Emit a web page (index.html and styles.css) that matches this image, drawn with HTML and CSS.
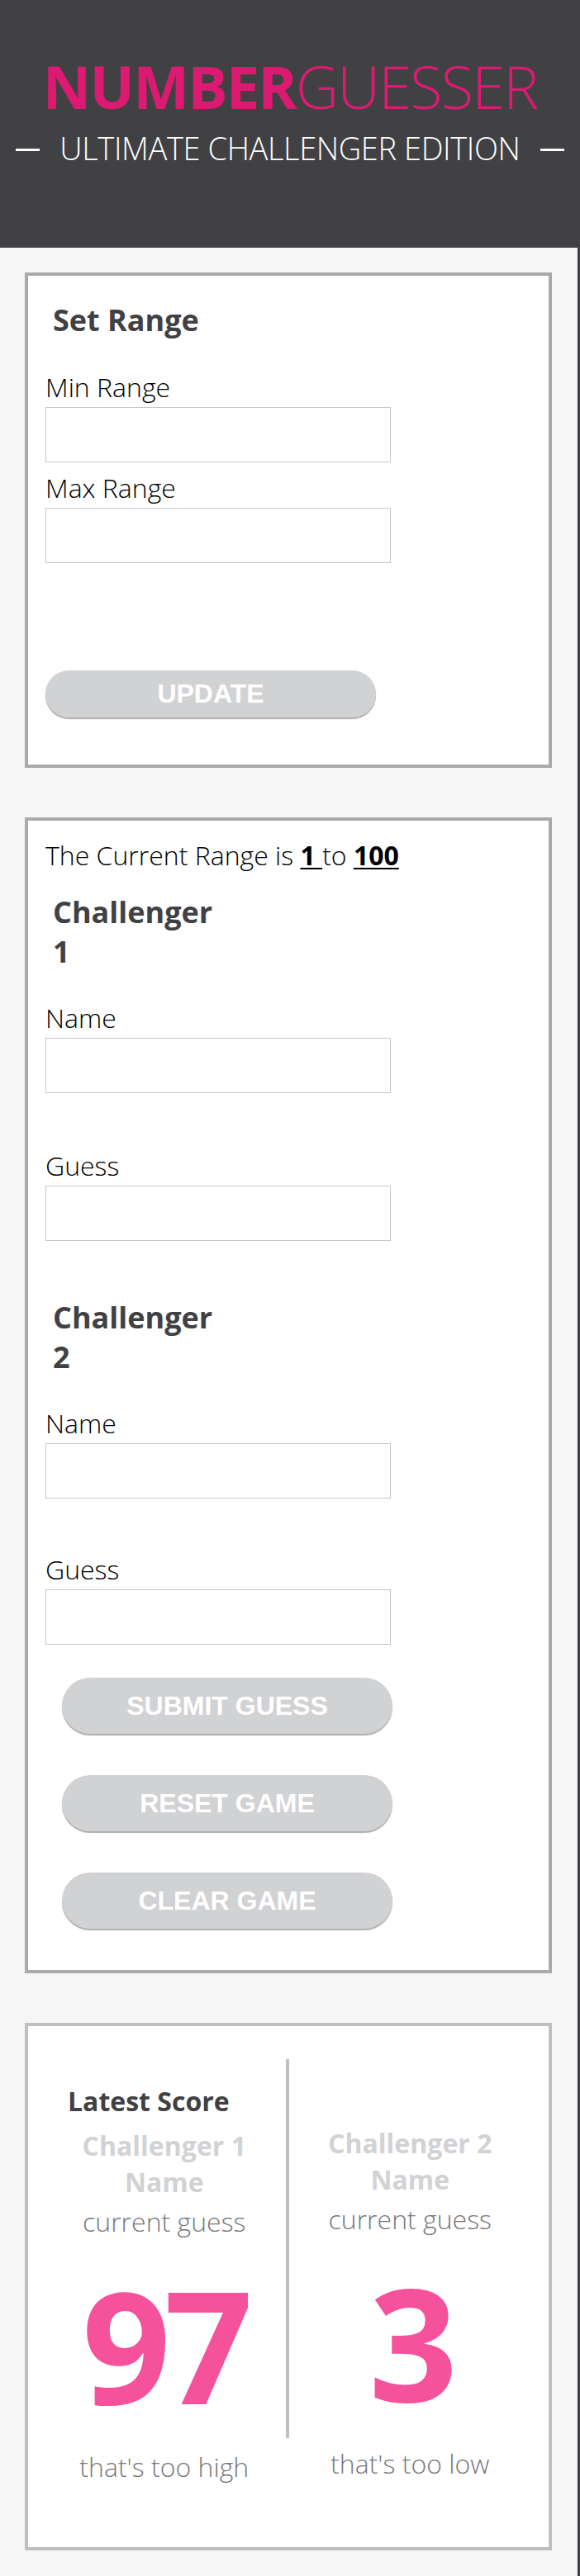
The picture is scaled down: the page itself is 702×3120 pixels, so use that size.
FILE: index.html
```html
<!DOCTYPE html>
<html lang="en">
<head>
<meta charset="utf-8">
<title>Number Guesser</title>
<link rel="stylesheet" href="styles.css">
</head>
<body>
<header class="masthead">
  <h1 class="title"><span class="title-bold">NUMBER</span><span class="title-light">GUESSER</span></h1>
  <p class="subtitle">ULTIMATE CHALLENGER EDITION</p>
</header>
<main class="page">
  <section class="card card-range">
    <h2 class="card-heading">Set Range</h2>
    <label class="field-label field-label--first" for="min-range">Min Range</label>
    <input class="field-input" id="min-range" type="text">
    <label class="field-label field-label--tight" for="max-range">Max Range</label>
    <input class="field-input" id="max-range" type="text">
    <button class="pill-btn pill-btn--update" type="button">UPDATE</button>
  </section>

  <section class="card card-game">
    <p class="range-line">The Current Range is <strong class="range-num">1 </strong>to <strong class="range-num">100</strong></p>
    <h2 class="card-heading card-heading--challenger">Challenger 1</h2>
    <label class="field-label field-label--after-head" for="name-1">Name</label>
    <input class="field-input" id="name-1" type="text">
    <label class="field-label field-label--loose" for="guess-1">Guess</label>
    <input class="field-input" id="guess-1" type="text">
    <h2 class="card-heading card-heading--challenger card-heading--second">Challenger 2</h2>
    <label class="field-label field-label--after-head" for="name-2">Name</label>
    <input class="field-input" id="name-2" type="text">
    <label class="field-label field-label--loose2" for="guess-2">Guess</label>
    <input class="field-input" id="guess-2" type="text">
    <div class="game-actions">
      <button class="pill-btn pill-btn--game" type="button">SUBMIT GUESS</button>
      <button class="pill-btn pill-btn--game" type="button">RESET GAME</button>
      <button class="pill-btn pill-btn--game" type="button">CLEAR GAME</button>
    </div>
  </section>

  <section class="card card-score">
    <div class="score-grid">
      <div class="score-col score-col--left">
        <h3 class="score-heading">Latest Score</h3>
        <p class="score-name">Challenger 1 Name</p>
        <p class="score-label">current guess</p>
        <p class="score-number">97</p>
      </div>
      <div class="score-divider"></div>
      <div class="score-col score-col--right">
        <p class="score-name">Challenger 2 Name</p>
        <p class="score-label">current guess</p>
        <p class="score-number">3</p>
      </div>
      <p class="score-feedback score-feedback--left">that's too high</p>
      <p class="score-feedback score-feedback--right">that's too low</p>
    </div>
  </section>
</main>
</body>
</html>
```
FILE: styles.css
```css
html {
  background: #414143;
}

body {
  margin: 0;
  font-family: "Open Sans", "Liberation Sans", sans-serif;
  color: #000;
}

/* ---------- header ---------- */
.masthead {
  box-sizing: border-box;
  height: 300px;
  padding-top: 68px;
  background: #414143;
  text-align: center;
}

.title {
  margin: 0;
  font-size: 72px;
  line-height: 72px;
  font-weight: 700;
  letter-spacing: -1.8px;
  color: #dc1a72;
}

.title-light {
  font-weight: 300;
}

.subtitle {
  display: flex;
  justify-content: center;
  align-items: center;
  gap: 24px;
  margin: 20px 0 0;
  font-size: 38px;
  line-height: 38px;
  font-weight: 300;
  letter-spacing: -0.4px;
  color: #fff;
}

.subtitle::before,
.subtitle::after {
  content: "";
  width: 29px;
  height: 3px;
  margin-top: 5px;
  background: #fff;
}

/* ---------- page ---------- */
.page {
  margin-right: 3px;
  padding: 30px 31px 31px 30px;
  background: #f6f6f6;
}

.card {
  box-sizing: border-box;
  background: #fff;
  border: 4px solid #aaaaaa;
  padding: 0 21px;
}

.card + .card {
  margin-top: 60px;
}

.card-range {
  padding-top: 30px;
  padding-bottom: 57px;
}

.card-game {
  padding-top: 22px;
  padding-bottom: 50px;
}

.card-heading {
  margin: 0;
  padding-left: 9px;
  font-size: 36px;
  line-height: 48px;
  font-weight: 700;
  color: #414143;
}

.card-heading--challenger {
  max-width: 200px;
  margin-top: 25px;
}

.card-heading--second {
  margin-top: 69px;
}

.field-label {
  display: block;
  font-size: 32px;
  line-height: 40px;
  font-weight: 300;
  color: #000;
}

.field-label--first {
  margin-top: 37px;
}

.field-label--tight {
  margin-top: 11px;
}

.field-label--after-head {
  margin-top: 36px;
}

.field-label--loose {
  margin-top: 68px;
}

.field-label--loose2 {
  margin-top: 66px;
}

.field-input {
  display: block;
  box-sizing: border-box;
  width: 418px;
  height: 67px;
  margin: 4px 0 0;
  padding: 0 12px;
  border: 1px solid #c6c6c6;
  background: #fff;
  font-family: "Open Sans", sans-serif;
  font-size: 28px;
}

.range-line {
  margin: 0;
  font-size: 32px;
  line-height: 40px;
  font-weight: 300;
}

.range-num {
  font-weight: 700;
  text-decoration: underline;
  text-decoration-thickness: 2px;
  text-underline-offset: 3px;
}

/* ---------- buttons ---------- */
.pill-btn {
  display: block;
  box-sizing: border-box;
  width: 400px;
  border: 0;
  border-radius: 36px;
  background: #d1d2d4;
  color: #fff;
  font-family: "Liberation Sans", Arial, sans-serif;
  font-size: 32px;
  font-weight: 700;
  box-shadow: 0 2px 1px #aeaeae;
  padding: 0;
}

.pill-btn--update {
  height: 57px;
  margin-top: 130px;
}

.game-actions {
  display: flex;
  flex-direction: column;
  gap: 50px;
  margin-top: 40px;
  padding-left: 20px;
}

.pill-btn--game {
  height: 68px;
}

/* ---------- score card ---------- */
.card-score {
  border-color: #bfbfbf;
  padding: 40px 0 77px;
}

.score-grid {
  display: grid;
  grid-template-columns: 1fr 4px 1fr;
  padding: 0 21px 0 18px;
  text-align: center;
}

.score-col {
  padding-bottom: 20px;
}

.score-col--left {
  grid-column: 1;
  grid-row: 1;
  padding-top: 31px;
}

.score-col--right {
  grid-column: 3;
  grid-row: 1;
  padding-top: 80px;
}

.score-divider {
  grid-column: 2;
  grid-row: 1;
  background: #bfbfbf;
}

.score-heading {
  margin: 0 0 12px 30px;
  text-align: left;
  font-size: 32px;
  line-height: 40px;
  font-weight: 700;
  color: #414143;
}

.score-name {
  max-width: 210px;
  margin: 0 auto;
  font-size: 32px;
  line-height: 44px;
  font-weight: 700;
  color: #d1d2d4;
}

.score-label {
  margin: 4px 0 0;
  font-size: 32px;
  line-height: 44px;
  font-weight: 300;
  color: #77777a;
}

.score-number {
  margin: 32px 0 0;
  font-size: 188px;
  line-height: 188px;
  font-weight: 700;
  letter-spacing: -8px;
  color: #f6519b;
}

.score-feedback {
  grid-row: 2;
  margin: 15px 0 0;
  font-size: 32px;
  line-height: 40px;
  font-weight: 300;
  color: #77777a;
}

.score-feedback--left {
  grid-column: 1;
}

.score-feedback--right {
  grid-column: 3;
  margin-top: 11px;
}
```
